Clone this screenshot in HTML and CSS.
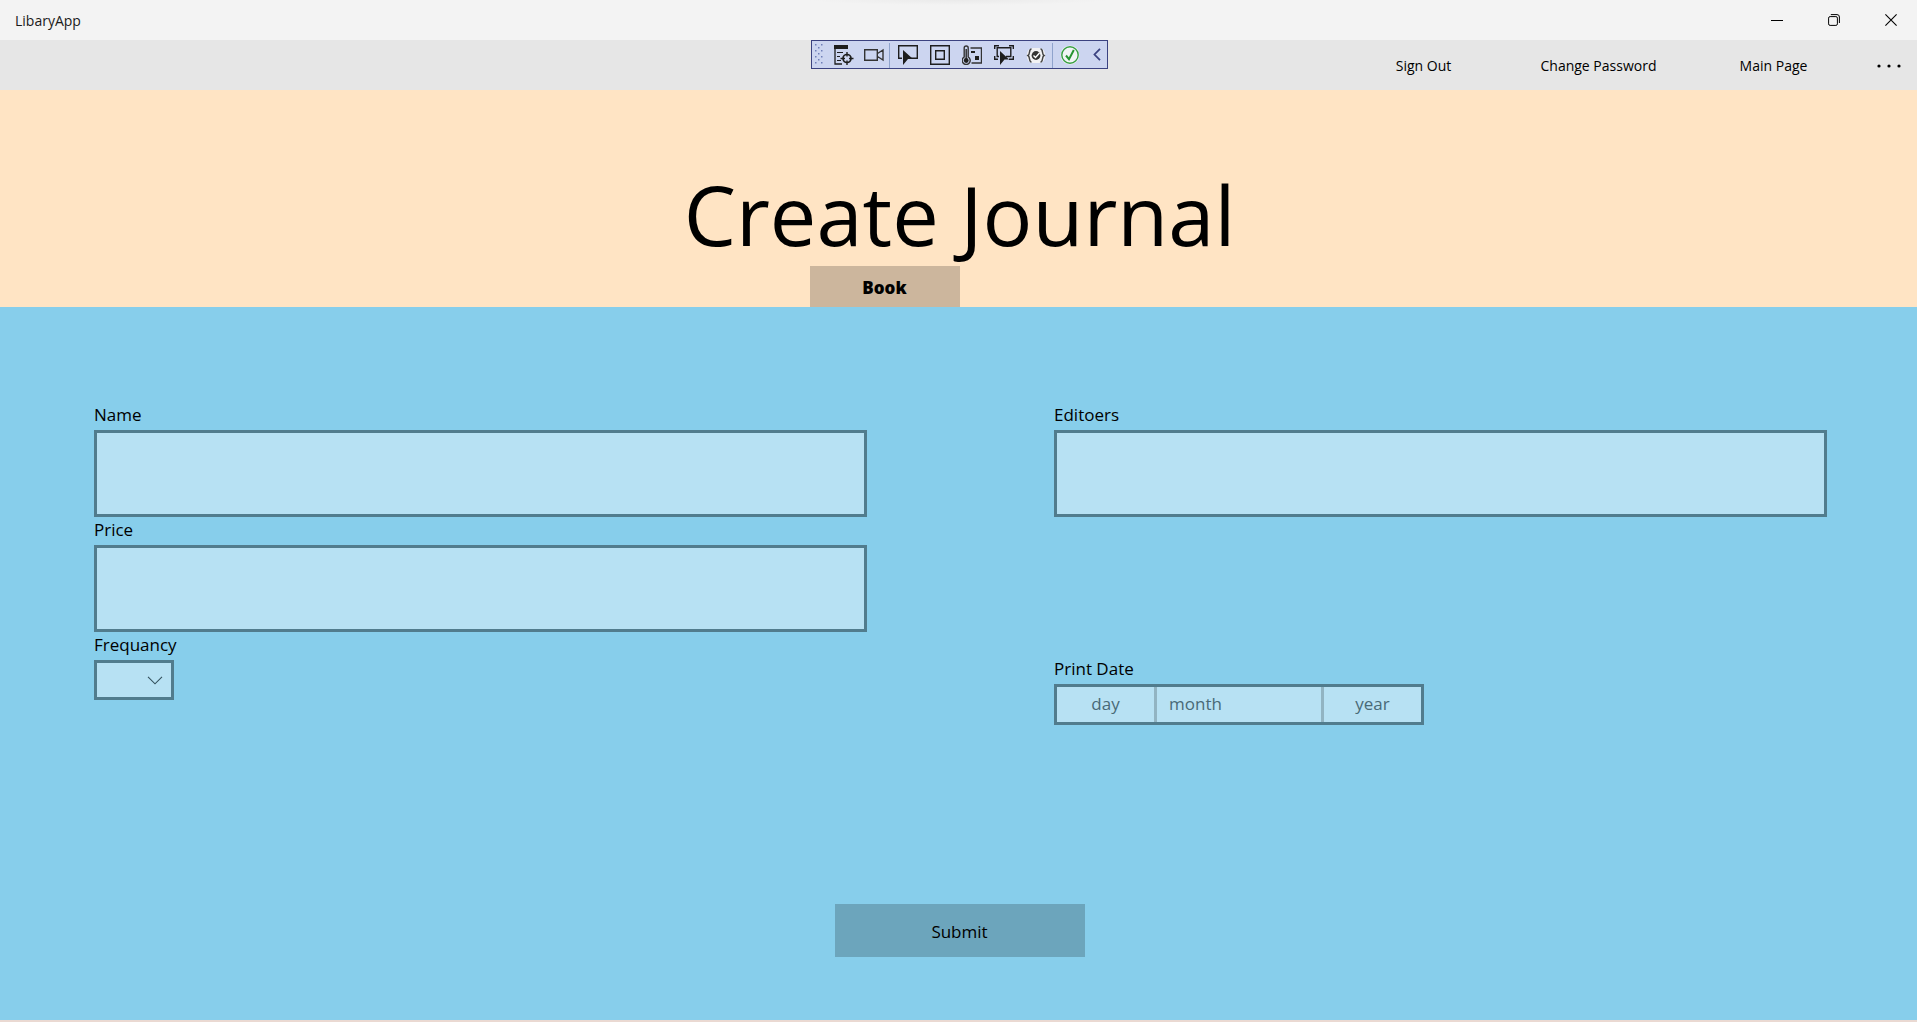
FILE: index.html
```html
<!DOCTYPE html>
<html lang="en">
<head>
<meta charset="utf-8">
<title>LibaryApp</title>
<meta name="viewport" content="width=device-width, initial-scale=1">
<link rel="stylesheet" href="styles.css">
</head>
<body>
<header class="titlebar">
  <span class="app-name">LibaryApp</span>
  <div class="window-controls">
    <button type="button" aria-label="Minimize"><svg width="12" height="12" viewBox="0 0 12 12"><path d="M0 6.5h12" stroke="#000" fill="none"/></svg></button>
    <button type="button" aria-label="Restore"><svg width="12" height="12" viewBox="0 0 12 12" fill="none" stroke="#000"><rect x=".6" y="2.6" width="8.8" height="8.8" rx="1.5"/><path d="M2.8 .6H9a2.4 2.4 0 0 1 2.4 2.4v6"/></svg></button>
    <button type="button" aria-label="Close"><svg width="12" height="12" viewBox="0 0 12 12"><path d="M.4 .4l11.2 11.2M11.6 .4L.4 11.6" stroke="#000" stroke-width="1.1" fill="none"/></svg></button>
  </div>
</header>

<nav class="commandbar">
  <button type="button" class="command">Sign Out</button>
  <button type="button" class="command">Change Password</button>
  <button type="button" class="command">Main Page</button>
  <button type="button" class="more" aria-label="More"><svg width="24" height="4" viewBox="0 0 24 4"><circle cx="2" cy="2" r="1.6"/><circle cx="12" cy="2" r="1.6"/><circle cx="22" cy="2" r="1.6"/></svg></button>

  <div class="debugbar" role="toolbar" aria-label="Debug tools">
    <svg class="grip" width="17" height="27" viewBox="0 0 17 27"><defs><pattern id="dots" x="3" y="3" width="6" height="6" patternUnits="userSpaceOnUse"><path d="M0 0h1.500v1.500H0zM3 3h1.500v1.500H3z" fill="#6f7fb8"/></pattern></defs><path d="M3 3h9v21H3z" fill="url(#dots)"/></svg>
    <button type="button" aria-label="Live Visual Tree"><svg width="20" height="20" viewBox="0 0 20 20" fill="none" stroke="#1e1e1e"><path d="M0 0h14v4H0z" fill="#1e1e1e" stroke="none"/><path d="M1 3v16h7" stroke-width="1.3"/><path d="M3 7.5h6M3 11.5h3M3 15.5h4" stroke-width="1.1"/><circle cx="13" cy="13.5" r="4" stroke-width="1.7"/><path d="M13 7v4.500M13 15.500V20M6.500 13.500H11M15 13.500h4.500" stroke-width="1.4"/></svg></button>
    <button type="button" aria-label="Record"><svg width="20" height="20" viewBox="0 0 20 20" fill="none" stroke="#333" stroke-width="1.4"><path d="M.7 4.700h12.600v10.600H.7zM13.500 8.500l5.500-3.500v10l-5.500-3.500"/></svg></button>
    <span class="sep sep-gap"></span>
    <button type="button" class="tool" aria-label="Select Element"><svg width="20" height="20" viewBox="0 0 20 20"><path d="M4 13.300H.7V.7h18.600v12.600H13" fill="none" stroke="#1e1e1e" stroke-width="1.4"/><path d="M5 5l10 9h-5l-5 6z" fill="#1e1e1e"/></svg></button>
    <button type="button" class="tool" aria-label="Display Layout Adorners"><svg width="20" height="20" viewBox="0 0 20 20" fill="none" stroke="#1e1e1e" stroke-width="1.4"><path d="M.7 .7h18.600v18.600H.7zM5.700 5.700h8.600v8.600H5.700z"/></svg></button>
    <button type="button" class="tool" aria-label="Hot Reload settings"><svg width="20" height="20" viewBox="0 0 20 20" fill="none" stroke="#333"><path d="M2.200 12V3a2 2 0 0 1 4 0v9a4 4 0 1 1-4 0z" stroke-width="1.400"/><path d="M4.200 4v11" stroke-width="1.500"/><circle cx="4.200" cy="15.500" r="2.400" fill="#1e1e1e" stroke="none"/><path d="M8.500 3h11v15h-10" stroke-width="1.400"/><path d="M9 6h4v2H9zM13 11h4v4h-4z" fill="#1e1e1e" stroke="none"/></svg></button>
    <button type="button" class="tool" aria-label="Track Focused Element"><svg width="20" height="20" viewBox="0 0 20 20"><path d="M.7 4V.7H5M15 .7h4.300V4M.7 11v3.300H4M19.300 11v3.300H15M5 11.500H3.200v-8.800h13.600v8.800H12" fill="none" stroke="#1e1e1e" stroke-width="1.4"/><path d="M6 6l9 8.500h-4.500L6 20z" fill="#1e1e1e"/></svg></button>
    <button type="button" class="tool" aria-label="Binding Failures"><svg width="20" height="20" viewBox="0 0 20 20"><rect x="1" y="3" width="18" height="15" rx="6" fill="#f1f1f3"/><path d="M5.500 4C2.500 4 4.500 9 2 10.500 4.500 12 2.500 17 5.500 17M14.500 4c3 0 1 5 3.500 6.500-2.500 1.500-.5 6.500-3.500 6.500" fill="none" stroke="#444" stroke-width="1.500"/><circle cx="10" cy="10.500" r="4.400" fill="#333"/><path d="M7.500 10.500l2 2 4-4.500" fill="none" stroke="#fff" stroke-width="1.400"/></svg></button>
    <span class="sep"></span>
    <button type="button" class="status" aria-label="Hot Reload available"><svg width="20" height="20" viewBox="0 0 20 20" fill="none"><circle cx="10" cy="10" r="9.400" fill="#f2f5f5"/><circle cx="10" cy="10" r="8.200" stroke="#389f42" stroke-width="1.400"/><path d="M6 10.500l3 3.700L13.800 5" stroke="#289432" stroke-width="2"/></svg></button>
    <button type="button" class="collapse" aria-label="Collapse"><svg width="8" height="13" viewBox="0 0 8 13"><path d="M7 .8L1.500 6.500 7 12.200" fill="none" stroke="#3b4280" stroke-width="1.800"/></svg></button>
  </div>
</nav>

<main class="page">
  <section class="banner">
    <h1>Create Journal</h1>
    <div class="tabs"><button type="button" class="tab">Book</button></div>
  </section>

  <form class="journal">
    <div class="columns">
      <div class="column">
        <div class="field"><label for="name">Name</label><input id="name" type="text" class="box"></div>
        <div class="field"><label for="price">Price</label><input id="price" type="text" class="box"></div>
        <div class="field">
          <label for="frequency">Frequancy</label>
          <div class="combo">
            <select id="frequency"><option></option><option value="d">Daily</option><option value="w">Weekly</option></select>
            <svg class="chevron" width="16" height="9" viewBox="0 0 16 9"><path d="M1 .8l7 7 7-7" fill="none" stroke="#33505c" stroke-width="1.100"/></svg>
          </div>
        </div>
      </div>
      <div class="column spread">
        <div class="field"><label for="editors">Editoers</label><input id="editors" type="text" class="box"></div>
        <div class="field">
          <label for="print-date">Print Date</label>
          <button type="button" id="print-date" class="date">
            <span class="part">day</span><span class="part month">month</span><span class="part">year</span>
          </button>
        </div>
      </div>
    </div>
    <button type="submit" class="submit">Submit</button>
  </form>
</main>
</body>
</html>
```
FILE: styles.css
```css
* {
  box-sizing: border-box;
}

body {
  display: flex;
  flex-direction: column;
  min-height: 100vh;
  margin: 0;
  font-family: "Open Sans", "Noto Sans", sans-serif;
  font-size: 17px;
  line-height: 24px;
  color: #000;
  background: #ead9d2;
}

button,
input,
select {
  margin: 0;
  padding: 0;
  border: 0;
  border-radius: 0;
  background: none;
  color: inherit;
  font: inherit;
}

svg {
  display: block;
}

.titlebar {
  display: flex;
  align-items: center;
  justify-content: space-between;
  height: 40px;
  padding-left: 15px;
  background: radial-gradient(ellipse 150px 5px at 50% 0, #eaeaea, #f3f3f3);
  font-size: 14px;
}

.app-name {
  padding-top: 2px;
  color: #1a1a1a;
}

.window-controls {
  display: flex;
  gap: 5px;
}

.window-controls button {
  display: grid;
  place-items: center;
  width: 52px;
  height: 38px;
}

.commandbar {
  position: relative;
  display: flex;
  justify-content: flex-end;
  height: 50px;
  background: #e6e6e6;
  font-size: 14px;
}

.command {
  width: 175px;
  padding-top: 2px;
}

.more {
  display: grid;
  place-items: center;
  width: 56px;
  padding-top: 2px;
}

.debugbar {
  position: absolute;
  top: 0;
  left: 50%;
  display: flex;
  height: 29px;
  margin-left: -148px;
  border: 1px solid #3b4280;
  background: #ccd5f0;
}

.debugbar button {
  display: grid;
  place-items: center;
  width: 30px;
}

.debugbar .tool {
  width: 32px;
}

.debugbar .status {
  width: 34px;
}

.debugbar .collapse {
  width: 20px;
}

.sep {
  width: 1px;
  margin-top: 2px;
  background: #8fa3cc;
}

.sep-gap {
  margin-right: 2px;
}

.page {
  display: flex;
  flex: 1;
  flex-direction: column;
  margin-bottom: 2px;
  background: #87ceeb;
}

.banner {
  padding: 72px 0 0 2px;
  background: #ffe4c4;
}

h1 {
  margin: 0;
  font-size: 83px;
  font-weight: 400;
  line-height: 104px;
  text-align: center;
}

.tabs {
  display: grid;
  grid-template-columns: 1fr 1fr;
}

.tab {
  justify-self: end;
  width: 150px;
  height: 41px;
  padding-top: 2px;
  background: #ccb69d;
  font-weight: 800;
}

.journal {
  display: flex;
  flex: 1;
  flex-direction: column;
  align-items: center;
  justify-content: space-between;
  padding: 95px 0 63px 2px;
}

.columns {
  display: grid;
  grid-template-columns: 1fr 1fr;
  gap: 187px;
  width: 100%;
  padding: 0 90px 0 92px;
}

.spread {
  display: flex;
  flex-direction: column;
  gap: 139px;
}

.field label {
  display: block;
  padding: 1px 0 3px;
}

.box {
  display: block;
  width: 100%;
  height: 87px;
  padding: 8px 12px;
}

.box,
.combo select,
.date {
  border: 3px solid #517c8d;
  background: #b7e1f3;
}

.combo {
  position: relative;
  width: 80px;
}

.combo select {
  display: block;
  width: 100%;
  height: 40px;
  appearance: none;
}

.chevron {
  position: absolute;
  top: 16px;
  right: 11px;
  pointer-events: none;
}

.date {
  display: grid;
  grid-template-columns: 97px 1fr 97px;
  width: 370px;
  height: 41px;
  color: #496a77;
}

.part {
  display: grid;
  place-items: center;
  height: 100%;
  padding-bottom: 2px;
}

.month {
  justify-items: start;
  padding-left: 12px;
  border: solid #92b4c2;
  border-width: 0 3px;
}

.submit {
  width: 250px;
  height: 53px;
  padding-top: 2px;
  background: #6ca5bc;
}
```
